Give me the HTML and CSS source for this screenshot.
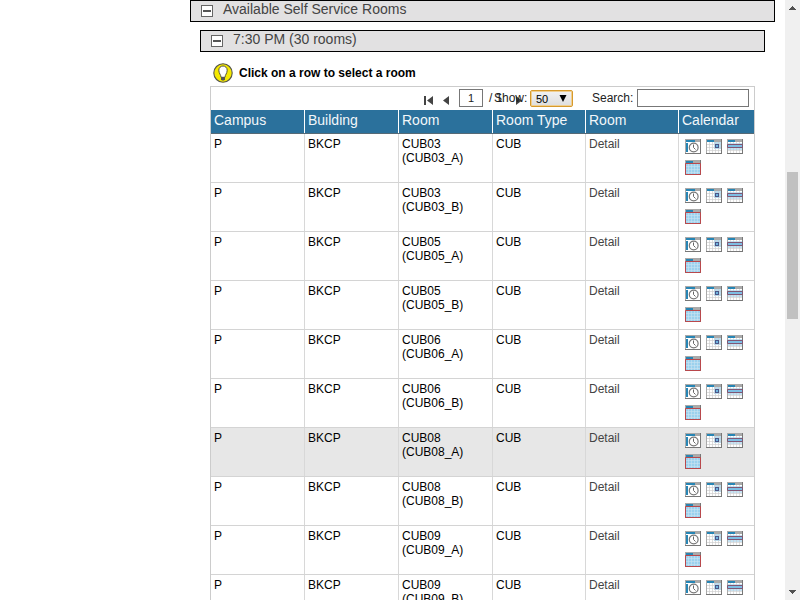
FILE: index.html
```
<!DOCTYPE html>
<html lang="en">
<head>
<meta charset="utf-8">
<title>Available Self Service Rooms</title>
<link rel="stylesheet" href="styles.css">
</head>
<body>
<svg class="defs" width="0" height="0" aria-hidden="true">
  <symbol id="frame" viewBox="0 0 16 15">
    <rect width="16" height="15" fill="#fff"/>
    <path d="M0 0h16v3H0z" fill="#aaa"/>
    <path d="M1 1h7v2H1z" fill="#2785b4"/>
  </symbol>
  <symbol id="edge" viewBox="0 0 16 15">
    <path d="M.5 0v15M0 .5h16" stroke="#aaa" fill="none"/>
    <path d="M15.5 0v15M0 14.5h16" stroke="#777" fill="none"/>
  </symbol>
  <symbol id="day" viewBox="0 0 16 15">
    <rect width="16" height="15" fill="#fff"/>
    <path d="M1 1h9v2H1zM1 4h2v9H1z" fill="#2785b4"/>
    <path d="M10 1h5v2h-5z" fill="#aaa"/>
    <circle cx="8.7" cy="8.5" r="4.4" fill="#fff" stroke="#777" stroke-width="1.2"/>
    <path d="M8.5 5.5v3l2 2" fill="none" stroke="#666"/>
    <use href="#edge" width="16" height="15"/>
  </symbol>
  <symbol id="date" viewBox="0 0 16 15">
    <use href="#frame" width="16" height="15"/>
    <path d="M8 3h7v7H8z" fill="#b9dcf0"/>
    <path d="M3.5 3v11M6.5 3v11M9.5 3v11M12.5 3v11M1 5.5h14M1 8.5h14M1 11.5h14" stroke="#ccc" stroke-opacity=".65"/>
    <rect x="9.5" y="5.5" width="3" height="3" fill="#6db6df" stroke="#4c5688"/>
    <use href="#edge" width="16" height="15"/>
  </symbol>
  <symbol id="week" viewBox="0 0 16 15">
    <use href="#frame" width="16" height="15"/>
    <path d="M1 4h14v7H1z" fill="#c4e2f3"/>
    <path d="M3.5 3v11M6.5 3v11M9.5 3v11M12.5 3v11M1 11.5h14" stroke="#ccc" stroke-opacity=".6"/>
    <path d="M1 6h14v2H1z" fill="#7dbfe4"/>
    <use href="#edge" width="16" height="15"/>
    <path d="M.5 5.5h15v3H.5z" fill="none" stroke="#805674"/>
  </symbol>
  <symbol id="month" viewBox="0 0 16 15">
    <use href="#frame" width="16" height="15"/>
    <path d="M1 4h14v10H1z" fill="#9bd1ee"/>
    <path d="M3.5 4v10M6.5 4v10M9.5 4v10M12.5 4v10M1 6.5h14M1 9.5h14M1 12.5h14" stroke="#c9e3f2" stroke-opacity=".6"/>
    <use href="#edge" width="16" height="15"/>
    <path d="M.5 3.5h15v11H.5z" fill="none" stroke="#b9484c"/>
  </symbol>
</svg>
<div class="viewport">
  <main class="content">
    <div class="bar bar-outer"><span class="toggle"></span><span>Available Self Service Rooms</span></div>
    <div class="bar bar-inner"><span class="toggle"></span><span>7:30 PM (30 rooms)</span></div>
    <div class="hint">
      <svg width="20" height="20" viewBox="0 0 20 20"><circle cx="10" cy="10" r="9.2" fill="#f5e900" stroke="#56564a" stroke-width="1.1"/><path d="M8 14.3C8 11.8 5.8 10.5 5.8 7.2a4.2 4.2 0 0 1 8.4 0C14.2 10.5 12 11.8 12 14.3z" fill="#fff" stroke="#55553c"/><path d="M8 14h4v2.2l-1 1.4H9l-1-1.4z" fill="#555"/></svg>
      <strong>Click on a row to select a room</strong>
    </div>
    <section class="panel">
      <div class="toolbar">
        <svg class="first" width="10" height="9" viewBox="0 0 10 9"><path d="M0 0h2v9H0zM9 0v9L3 4.5z" fill="#444"/></svg>
        <svg class="prev" width="6" height="9" viewBox="0 0 6 9"><path d="M6 0v9L0 4.5z" fill="#444"/></svg>
        <input class="page" value="1">
        <span class="total">/ 1</span>
        <svg class="next" width="6" height="9" viewBox="0 0 6 9"><path d="M0 0v9L6 4.5z" fill="#444"/></svg>
        <span class="show">Show:</span>
        <span class="select"><span>50</span><svg width="8" height="7" viewBox="0 0 8 7"><path d="M.5 0h7L4 7z" fill="#000"/></svg></span>
        <span class="search-label">Search:</span>
        <input class="search">
      </div>
      <div class="row head"><div>Campus</div><div>Building</div><div>Room</div><div>Room Type</div><div>Room</div><div>Calendar</div></div>
      <div id="rows"></div>
    </section>
  </main>
  <aside class="scrollbar">
    <svg class="up" width="7" height="4" viewBox="0 0 7 4" shape-rendering="crispEdges"><path d="M3 0h1v1h1v1h1v1h1v1H0V3h1V2h1V1h1z" fill="#505050"/></svg>
    <div class="thumb"></div>
    <svg class="down" width="7" height="4" viewBox="0 0 7 4" shape-rendering="crispEdges"><path d="M0 0h7v1H6v1H5v1H4v1H3V3H2V2H1V1H0z" fill="#505050"/></svg>
  </aside>
</div>
<script src="rooms.js"></script>
</body>
</html>
```
FILE: styles.css
```
* { box-sizing: border-box; }
body { margin: 0; background: #fff; color: #000; font: 12px/14px "Liberation Sans", Arial, sans-serif; }
.defs { position: absolute; }
.viewport { display: flex; justify-content: space-between; height: 600px; overflow: hidden; }
.content { width: 585px; margin-left: 190px; }
.bar { display: flex; height: 22px; border: 1px solid #000; background: #e2e1e2; color: #444; font-size: 14px; line-height: 16px; padding-left: 10px; }
.bar-inner { margin: 8px 10px 0; }
.toggle { width: 12px; height: 12px; margin: 4px 10px 0 0; border: 1px solid #666; background: linear-gradient(#555, #555) 1px 4px / 8px 2px no-repeat #fff; }
.hint { display: flex; align-items: center; gap: 6px; height: 20px; margin: 11px 0 3px 23px; }
.panel { width: 545px; height: 530px; margin-left: 20px; border: 1px solid #ccc; }
.toolbar { display: flex; height: 23px; color: #222; }
.toolbar > * { flex-shrink: 0; }
.first { margin: 9px 0 0 213px; }
.prev { margin: 9px 0 0 9px; }
input { font: 11px "Liberation Sans", Arial, sans-serif; color: #222; background: #fff; border: 1px solid #777; padding: 0; height: 18px; margin: 2px 0 0; }
.page { width: 24px; margin-left: 10px; text-align: center; }
.total { width: 27px; margin: 4px 0 0 6px; white-space: pre; }
.next { margin: 9px -27px 0 0; }
.show { width: 36px; margin: 4px 0 0 -1px; }
.select { display: flex; justify-content: space-between; width: 43px; height: 17px; margin-top: 3px; padding: 0 5px; border: 1px solid #d79a2b; border-radius: 2px; background: linear-gradient(#f2f2f2, #dedede); box-shadow: inset 0 0 0 1px #f0cf91; font-size: 11px; line-height: 16px; color: #000; }
.select svg { margin-top: 4px; }
.search-label { margin: 4px 0 0 19px; width: 45px; }
.search { width: 112px; }
.row { display: grid; grid-template-columns: 94px 94px 94px 93px 93px 75px; height: 49px; border-bottom: 1px solid #d4d4d4; }
.row > div { padding: 3px 3px 0; border-right: 1px solid #d8d8d8; }
.row > div:last-child { border-right: 0; }
.head { height: 24px; background: #2b719c; color: #f2f7fa; font-size: 14px; line-height: 16px; border-bottom-color: #566a76; }
.head > div { padding-top: 2px; border-right-color: #fff; }
.row .detail { color: #444; }
.row.hover { background: #e7e7e7; }
.row .icons { display: flex; flex-wrap: wrap; align-content: flex-start; gap: 6px 5px; padding: 5px 0 0 6px; }
.icons svg { width: 16px; height: 15px; }
.scrollbar { display: flex; flex-direction: column; width: 15px; height: 600px; background: #f0f0f0; }
.up { margin: 6px 0 162px 4px; }
.thumb { width: 11px; height: 147px; margin-left: 2px; background: #c1c1c1; }
.down { margin: 271px 0 0 4px; }
```
FILE: rooms.js
```
const rooms = [["03","A"],["03","B"],["05","A"],["05","B"],["06","A"],["06","B"],["08","A"],["08","B"],["09","A"],["09","B"]];
const icons = ["day", "date", "week", "month"].map(n => `<svg viewBox="0 0 16 15"><use href="#${n}" width="16" height="15"/></svg>`).join("");
document.getElementById("rows").innerHTML = rooms.map(([n, s], i) =>
  `<div class="row${i === 6 ? " hover" : ""}"><div>P</div><div>BKCP</div><div>CUB${n}<br>(CUB${n}_${s})</div><div>CUB</div><div class="detail">Detail</div><div class="icons">${icons}</div></div>`
).join("");
```
